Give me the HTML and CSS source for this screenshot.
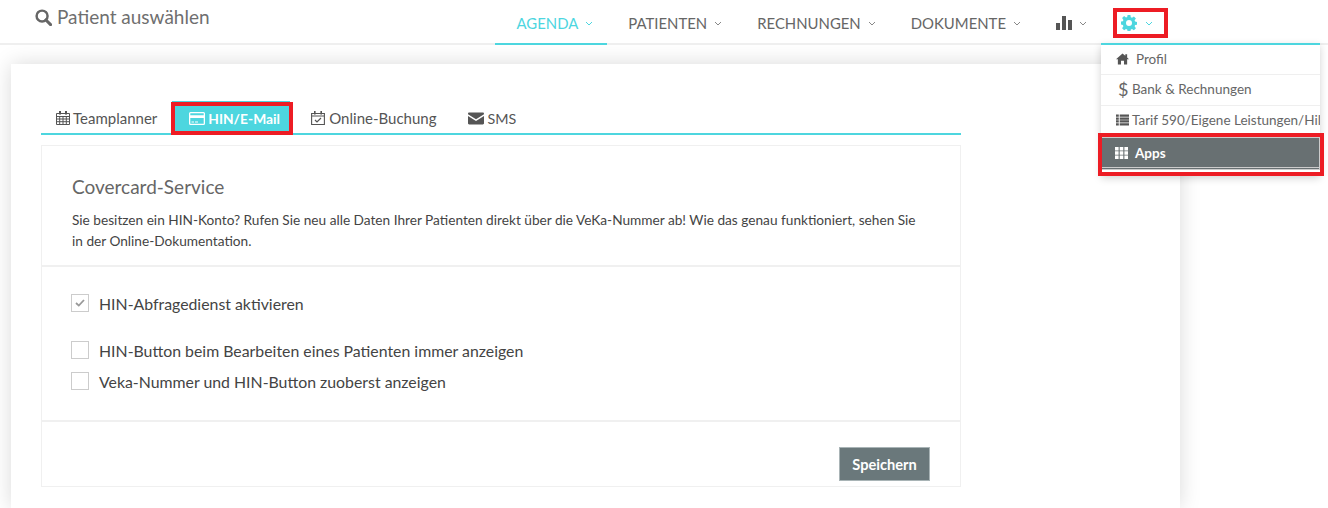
FILE: index.html
```html
<!DOCTYPE html>
<html lang="de">
<head>
  <meta charset="UTF-8">
  <title>Einstellungen</title>
  <link rel="stylesheet" href="styles.css">
</head>
<body>

  <!-- Top bar -->
  <header class="topbar">
    <div class="search">
      <svg class="search-icon" viewBox="0 0 18 18"><circle cx="7.500" cy="7.500" r="5.800" fill="none" stroke="#666" stroke-width="2.600"/><path d="M11.600 11.600l4.900 4.900" stroke="#666" stroke-width="3.200" stroke-linecap="round"/></svg>
      <span>Patient auswählen</span>
    </div>
    <nav class="mainnav">
      <a class="nav-item active">AGENDA<svg class="chev" viewBox="0 0 8 5"><path d="M1 1l3 3 3-3"/></svg></a>
      <a class="nav-item">PATIENTEN<svg class="chev" viewBox="0 0 8 5"><path d="M1 1l3 3 3-3"/></svg></a>
      <a class="nav-item">RECHNUNGEN<svg class="chev" viewBox="0 0 8 5"><path d="M1 1l3 3 3-3"/></svg></a>
      <a class="nav-item">DOKUMENTE<svg class="chev" viewBox="0 0 8 5"><path d="M1 1l3 3 3-3"/></svg></a>
      <a class="nav-item">
        <svg class="stats-icon" viewBox="0 0 16 14"><path d="M0 7h4v7H0zM6 0h4v14H6zM12 4h4v10h-4z" fill="#555"/></svg>
        <svg class="chev" viewBox="0 0 8 5"><path d="M1 1l3 3 3-3"/></svg>
      </a>
      <a class="nav-item nav-gear">
        <svg class="gear-icon" viewBox="0 0 16 16"><path fill="#4dd6df" fill-rule="evenodd" d="M6.600 0h2.800l.4 2.200 1.200.5 1.900-1.300 2 2-1.300 1.900.5 1.200 1.900.4v2.800l-1.900.4-.5 1.200 1.300 1.900-2 2-1.900-1.300-1.200.5-.4 2.100H6.600l-.4-2.100-1.200-.5-1.900 1.300-2-2 1.300-1.900-.5-1.200L0 9.400V6.600l1.900-.4.5-1.200L1.100 3.100l2-2L5 2.400l1.200-.5zM8 5a3 3 0 1 0 0 6 3 3 0 0 0 0-6z"/></svg>
        <svg class="chev chev-teal" viewBox="0 0 8 5"><path d="M1 1l3 3 3-3"/></svg>
      </a>
    </nav>
  </header>

  <!-- Settings dropdown -->
  <div class="dropdown">
    <a class="drop-item drop-profil">
      <svg class="drop-icon" viewBox="0 0 14 12"><path d="M7 0L0 6.200h2V12h3.400V8h3.200v4H12V6.200h2l-2-1.900V1h-2v1.400z" fill="#555"/></svg>
      <span class="drop-gap">Profil</span>
    </a>
    <a class="drop-item drop-bank"><span class="dollar">$</span><span>Bank &amp; Rechnungen</span></a>
    <a class="drop-item drop-tarif">
      <svg class="drop-icon list-icon" viewBox="0 0 14 12"><path d="M0 0h3v2.400H0zM4 0h10v2.400H4zM0 3.200h3v2.400H0zM4 3.200h10v2.400H4zM0 6.400h3v2.400H0zM4 6.400h10v2.400H4zM0 9.600h3V12H0zM4 9.600h10V12H4z" fill="#555"/></svg>
      <span>Tarif 590/Eigene Leistungen/Hilfsmittel</span>
    </a>
    <a class="drop-item drop-active">
      <svg class="drop-icon" viewBox="0 0 13 12"><path d="M0 0h3.600v3.400H0zM4.700 0h3.600v3.400H4.700zM9.400 0H13v3.400H9.400zM0 4.300h3.600v3.400H0zM4.700 4.300h3.600v3.400H4.700zM9.400 4.300H13v3.400H9.400zM0 8.600h3.600V12H0zM4.700 8.600h3.600V12H4.700zM9.400 8.600H13V12H9.400z" fill="#fff"/></svg>
      <span class="drop-gap">Apps</span>
    </a>
  </div>

  <!-- Main card -->
  <main class="card">
    <div class="tabs">
      <a class="tab tab-team">
        <svg class="tab-icon" viewBox="0 0 14 14"><path fill="none" stroke="#555" d="M.5 2.500h13v11H.5zM.5 5.500h13M3.700 5.500v8M7 5.500v8M10.300 5.500v8M.5 8h13M.5 10.700h13"/><path d="M3 0h2v3.500H3zM9 0h2v3.500H9z" fill="#555"/></svg>
        Teamplanner
      </a>
      <a class="tab tab-active">
        <svg class="tab-icon card-icon" viewBox="0 0 16 13"><path fill="#fff" fill-rule="evenodd" d="M1.500 0h13A1.500 1.500 0 0 1 16 1.500v10a1.500 1.500 0 0 1-1.500 1.500h-13A1.500 1.500 0 0 1 0 11.500v-10A1.500 1.500 0 0 1 1.500 0zM1.300 1.300v1.900h13.400V1.300zM1.300 6v5.700h13.400V6zM2.500 9.500h2.500v1H2.500zM6 9.500h3v1H6z"/></svg>
        HIN/E-Mail
      </a>
      <a class="tab tab-online">
        <svg class="tab-icon" viewBox="0 0 14 14"><path fill="none" stroke="#555" stroke-width="1.100" d="M.6 2.500h12.800v11H.6zM.6 5h12.800"/><path d="M3 0h1.600v3.400H3zM9.400 0H11v3.400H9.400z" fill="#555"/><path d="M4 9l2 2 4-4" fill="none" stroke="#555" stroke-width="1.200"/></svg>
        Online-Buchung
      </a>
      <a class="tab tab-sms">
        <svg class="tab-icon mail-icon" viewBox="0 0 16 12"><path fill="#555" d="M0 1.200C0 .5.500 0 1.200 0h13.600c.7 0 1.200.5 1.200 1.200v.5L8 6.800 0 1.700zM0 3.400V10.800c0 .7.500 1.200 1.200 1.200h13.600c.7 0 1.200-.5 1.200-1.200V3.400L8 8.500z"/></svg>
        SMS
      </a>
    </div>

    <section class="panel">
      <div class="panel-head">
        <h2>Covercard-Service</h2>
        <p>Sie besitzen ein HIN-Konto? Rufen Sie neu alle Daten Ihrer Patienten direkt über die VeKa-Nummer ab! Wie das genau funktioniert, sehen Sie in der Online-Dokumentation.</p>
      </div>
      <div class="panel-body">
        <label class="check check-first">
          <span class="box"><svg viewBox="0 0 10 8"><path d="M1 4l2.800 2.600L9 1" fill="none" stroke="#999" stroke-width="1.800"/></svg></span>
          HIN-Abfragedienst aktivieren
        </label>
        <label class="check"><span class="box"></span>HIN-Button beim Bearbeiten eines Patienten immer anzeigen</label>
        <label class="check"><span class="box"></span>Veka-Nummer und HIN-Button zuoberst anzeigen</label>
      </div>
      <div class="panel-foot">
        <button class="save">Speichern</button>
      </div>
    </section>
  </main>

  <!-- Red annotation boxes from the screenshot -->
  <div class="mark mark-gear"></div>
  <div class="mark mark-tab"></div>
  <div class="mark mark-apps"></div>

</body>
</html>
```

FILE: styles.css
```css
html, body {
  margin: 0;
  height: 508px;
  overflow: hidden;
}

body {
  font-family: Lato, "Open Sans", sans-serif;
  color: #555;
  background-color: #fff;
  position: relative;
}

a {
  color: inherit;
  text-decoration: none;
}

/* Top bar */
.topbar {
  height: 43px;
  display: flex;
  justify-content: space-between;
  border-bottom: 2px solid #efefef;
  background-color: #fff;
  position: relative;
  z-index: 2;
}

.search {
  display: flex;
  align-items: flex-start;
  gap: 5px;
  margin-left: 35px;
  padding-top: 6px;
  font-size: 19px;
  line-height: 22px;
  color: #6f6f6f;
}

.search-icon {
  width: 17px;
  height: 17px;
  margin-top: 3px;
}

.mainnav {
  display: flex;
  margin-right: 161px;
}

.nav-item {
  display: flex;
  align-items: center;
  height: 45px;
  box-sizing: border-box;
  padding: 3px 14px 0 21px;
  font-size: 14.900px;
  color: #666;
  white-space: nowrap;
  border-bottom: 2px solid transparent;
}

.nav-item.active {
  color: #4dd6df;
  border-bottom-color: #4dd6df;
}

.nav-gear {
  padding-left: 20px;
}

.chev {
  width: 8px;
  height: 5px;
  margin-left: 7px;
  fill: none;
  stroke: #888;
  stroke-width: 1;
}

.active .chev,
.chev-teal {
  stroke: #4dd6df;
}

.stats-icon {
  width: 16px;
  height: 14px;
}

.gear-icon {
  width: 16px;
  height: 16px;
  margin-right: 1px;
}

/* Dropdown */
.dropdown {
  position: absolute;
  left: 1101px;
  top: 43px;
  width: 219px;
  height: 130px;
  overflow: hidden;
  background-color: #fff;
  border-top: 2px solid #4dd6df;
  box-shadow: 0 3px 8px rgba(0, 0, 0, 0.18);
  z-index: 5;
}

.drop-item {
  display: flex;
  align-items: center;
  box-sizing: border-box;
  padding: 0 0 2px 15px;
  font-size: 13.500px;
  color: #666;
  white-space: nowrap;
  border-bottom: 1px solid #efefef;
}

.drop-profil {
  height: 30px;
}

.drop-bank {
  height: 31px;
}

.drop-tarif {
  height: 30px;
}

.drop-icon {
  width: 13px;
  height: 12px;
  flex-shrink: 0;
}

.drop-gap {
  margin-left: 7px;
}

.list-icon {
  margin-right: 3px;
}

.dollar {
  font-size: 18px;
  width: 16px;
  padding-left: 2px;
  box-sizing: border-box;
}

.drop-active {
  height: 33px;
  margin-top: 1px;
  padding: 0 0 0 13px;
  font-weight: 700;
  color: #fff;
  background-color: #687072;
  border: 1px solid #ccc;
  border-bottom: 3px double #ccc;
}

/* Card */
.card {
  margin: 19px 0 0 11px;
  width: 1169px;
  height: 444px;
  box-sizing: border-box;
  padding: 37px 30px 0;
  background-color: #fff;
  box-shadow: 0 0 20px rgba(0, 0, 0, 0.15);
}

.tabs {
  display: flex;
  height: 34px;
  width: 920px;
  box-sizing: border-box;
  border-bottom: 2px solid #4dd6df;
}

.tab {
  display: flex;
  align-items: center;
  gap: 3px;
  padding-top: 2px;
  font-size: 15px;
  color: #555;
  white-space: nowrap;
}

.tab-team {
  margin-left: 15px;
  margin-right: 15px;
}

.tab-active {
  width: 118px;
  box-sizing: border-box;
  padding-left: 17px;
  color: #fff;
  font-size: 13.800px;
  font-weight: 700;
  background-color: #4dd6df;
  margin-right: 21px;
}

.tab-online {
  gap: 4px;
  margin-right: 32px;
}

.tab-sms {
  font-size: 14.300px;
}

.tab-icon {
  width: 14px;
  height: 14px;
}

.card-icon,
.mail-icon {
  width: 16px;
  height: 13px;
}

/* Panel */
.panel {
  margin-top: 10px;
  width: 918px;
  height: 340px;
  border: 1px solid #f0f0f0;
}

.panel-head {
  height: 121px;
  box-sizing: border-box;
  padding: 30px 40px 0 30px;
  border-bottom: 2px solid #f0f0f0;
}

.panel-head h2 {
  margin: 0 0 12px;
  font-size: 19px;
  line-height: 22px;
  font-weight: 400;
  color: #666;
}

.panel-head p {
  margin: 0;
  font-size: 13.660px;
  line-height: 21px;
  color: #444;
}

.panel-body {
  height: 155px;
  box-sizing: border-box;
  padding-top: 26px;
  border-bottom: 2px solid #f0f0f0;
}

.check {
  display: flex;
  align-items: center;
  gap: 10px;
  height: 20px;
  margin: 0 0 11px 29px;
  font-size: 15.850px;
  color: #444;
}

.check-first {
  margin-bottom: 27px;
}

.box {
  display: flex;
  align-items: center;
  justify-content: center;
  width: 16px;
  height: 16px;
  border: 1px solid #ccc;
  background-color: #fff;
}

.box svg {
  width: 10px;
  height: 8px;
}

.panel-foot {
  display: flex;
  justify-content: flex-end;
  padding: 25px 30px 0;
}

.save {
  width: 91px;
  height: 34px;
  border: 1px solid #a9b4b6;
  background-color: #6a787b;
  color: #fff;
  font-family: inherit;
  font-size: 14.600px;
  font-weight: 700;
}

/* Annotations */
.mark {
  position: absolute;
  box-sizing: border-box;
  border: 4px solid #ed1c24;
  z-index: 10;
}

.mark-gear {
  left: 1113px;
  top: 8px;
  width: 55px;
  height: 30px;
}

.mark-tab {
  left: 171px;
  top: 102px;
  width: 122px;
  height: 33px;
}

.mark-apps {
  left: 1098px;
  top: 133px;
  width: 226px;
  height: 43px;
}
```
